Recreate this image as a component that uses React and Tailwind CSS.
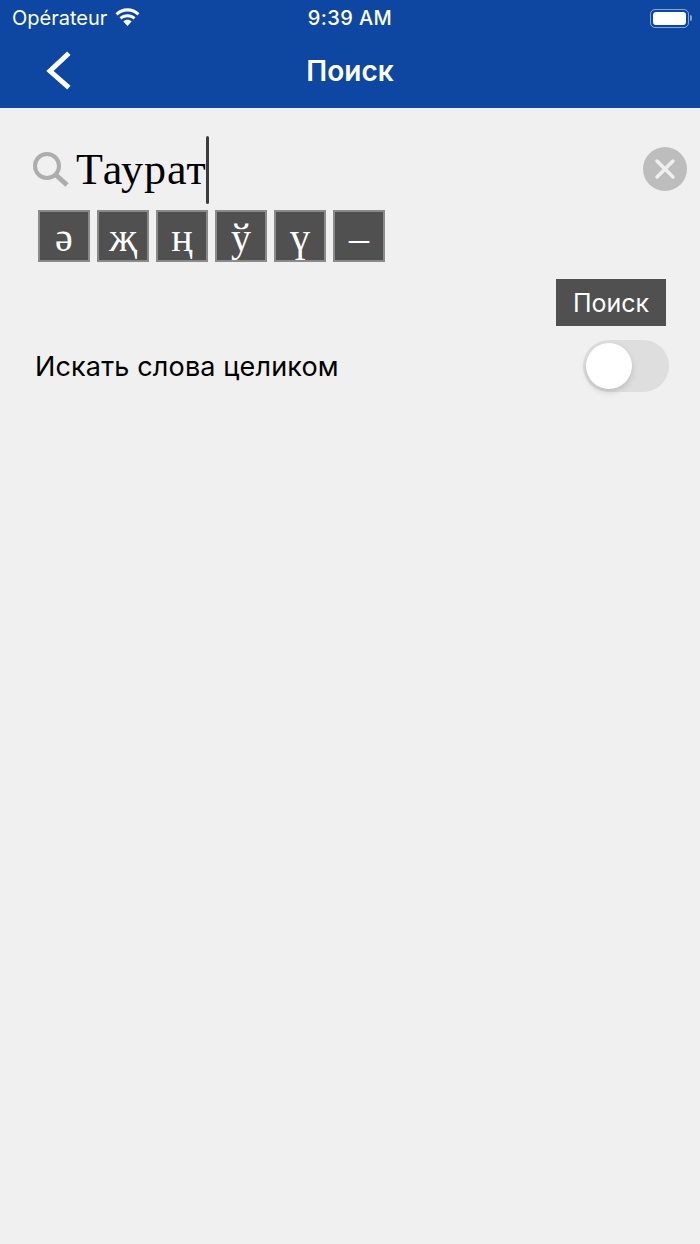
import React from "react";

const KEYS = ["ә", "җ", "ң", "ў", "ү", "–"];
const SANS = "font-['Inter','Liberation_Sans',sans-serif]";

const Wifi = () => (
  <svg width="27" height="20" viewBox="0 0 26 19" fill="white">
    <path d="M13 3.200c3.700 0 7 1.400 9.600 3.800l1.900-2.100C21.400 2 17.400.2 13 .2S4.600 2 1.500 4.900L3.400 7C6 4.600 9.300 3.200 13 3.200z" />
    <path d="M13 8.700c2.200 0 4.200.8 5.800 2.200l1.900-2.100C18.600 6.900 15.900 5.800 13 5.800S7.400 6.900 5.300 8.800l1.900 2.100c1.600-1.400 3.600-2.200 5.800-2.200z" />
    <path d="M13 11.300c-1.500 0-2.900.6-4 1.500l4 4.500 4-4.500c-1.100-.9-2.500-1.500-4-1.500z" />
  </svg>
);

const StatusBar = () => (
  <div className={`grid grid-cols-3 items-center h-9 pl-3 pr-2 text-white ${SANS}`}>
    <div className="flex items-center gap-[7px]">
      <span className="text-[20px]">Opérateur</span>
      <Wifi />
    </div>
    <span className="text-center pr-1 text-[20px] font-medium tracking-[0.4px]">9:39 AM</span>
    <div className="flex justify-end items-center">
      <div className="w-[39px] h-[19px] rounded-[5px] border border-white/50 p-[2px]">
        <div className="w-full h-full rounded-[3px] bg-white" />
      </div>
      <div className="w-[2px] h-[6px] ml-[1px] rounded-r bg-white/50" />
    </div>
  </div>
);

const Header = () => (
  <div className="bg-[#0d47a1]">
    <StatusBar />
    <div className="relative h-[72px] flex items-center justify-center pb-[2px]">
      <button className="absolute left-[45px] top-[15px]">
        <svg width="28" height="40" viewBox="0 0 28 40" fill="none" stroke="white" strokeWidth="5" strokeLinecap="square">
          <path d="M22 4 5 20l17 15" />
        </svg>
      </button>
      <span className={`text-white text-[28px] font-semibold ${SANS}`}>Поиск</span>
    </div>
  </div>
);

const SearchRow = () => (
  <div className="flex items-center h-[68px] pl-[33px] pr-[13px]">
    <svg width="36" height="36" viewBox="0 0 36 36" fill="none" stroke="#adadad" className="shrink-0">
      <circle cx="14" cy="14" r="12" strokeWidth="4" />
      <path d="M23 23l11 10" strokeWidth="5" />
    </svg>
    <div className="flex items-center ml-[7px] flex-1">
      <span className="font-['Liberation_Serif',serif] text-[44px] leading-none tracking-[1px] text-black">Таурат</span>
      <div className="w-[3px] h-[68px] -ml-px rounded bg-[#3c3c3c]" />
    </div>
    <button className="w-11 h-11 -mt-[2px] rounded-full bg-[#bdbdbd] flex items-center justify-center">
      <svg width="22" height="22" viewBox="0 0 22 22" stroke="#efefef" strokeWidth="3.500" strokeLinecap="round">
        <path d="M3 3l16 16M19 3 3 19" />
      </svg>
    </button>
  </div>
);

const SpecialKeys = () => (
  <div className="flex gap-[7px] mt-[6px] ml-[38px]">
    {KEYS.map((k) => (
      <button
        key={k}
        className="w-[52px] h-[52px] pt-1 bg-[#505050] border-2 border-[#8a8a8a] flex items-center justify-center text-white font-['Liberation_Serif',serif] text-[40px] leading-none"
      >
        {k}
      </button>
    ))}
  </div>
);

export default function App() {
  return (
    <div className="w-[700px] h-[1244px] bg-[#f0f0f0] flex flex-col">
      <Header />
      <div className="pt-7">
        <SearchRow />
        <SpecialKeys />
        <div className="flex justify-end mt-[17px] pr-[34px]">
          <button className={`w-[110px] h-[47px] pt-[2px] bg-[#505050] text-white text-[25px] ${SANS}`}>Поиск</button>
        </div>
        <div className="flex items-center justify-between mt-[14px] pl-[35px] pr-[31px]">
          <span className={`pt-[2px] text-[27px] tracking-[0.15px] text-black ${SANS}`}>Искать слова целиком</span>
          <div className="w-[86px] h-[52px] rounded-full bg-[#dedede] p-[3px]">
            <div className="w-[46px] h-[46px] rounded-full bg-white shadow-[0_3px_6px_rgba(0,0,0,0.15)]" />
          </div>
        </div>
      </div>
    </div>
  );
}
